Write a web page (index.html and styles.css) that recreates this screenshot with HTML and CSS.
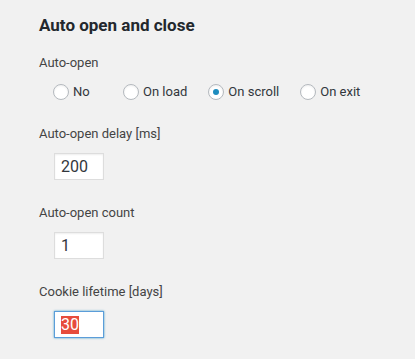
FILE: index.html
```html
<!DOCTYPE html>
<html>
<head>
<meta charset="utf-8">
<link rel="stylesheet" href="styles.css">
</head>
<body>
<div class="panel">
  <h3 class="title">Auto open and close</h3>
  <div class="field field-open">
    <div class="label">Auto-open</div>
    <div class="radios">
      <label class="opt opt-first"><span class="radio"></span><span>No</span></label>
      <label class="opt"><span class="radio"></span><span>On load</span></label>
      <label class="opt"><span class="radio checked"></span><span>On scroll</span></label>
      <label class="opt"><span class="radio"></span><span>On exit</span></label>
    </div>
  </div>
  <div class="field field-delay">
    <div class="label">Auto-open delay [ms]</div>
    <input class="num" type="text" value="200">
  </div>
  <div class="field field-count">
    <div class="label">Auto-open count</div>
    <input class="num" type="text" value="1">
  </div>
  <div class="field field-cookie">
    <div class="label">Cookie lifetime [days]</div>
    <div class="num focused"><span class="sel">30</span></div>
  </div>
</div>
</body>
</html>
```
FILE: styles.css
```css
html, body {
  margin: 0;
  padding: 0;
  background: #f1f1f1;
}
body {
  font-family: Roboto, "Noto Sans", sans-serif;
  color: #32373c;
  width: 415px;
  height: 359px;
  overflow: hidden;
}
.panel {
  padding: 14px 0 0 39px;
}
.title {
  margin: 0;
  font-size: 17px;
  font-weight: 700;
  color: #23282d;
  line-height: 22px;
}
.field {
  display: flex;
  flex-direction: column;
  align-items: flex-start;
}
.label {
  font-size: 13px;
  line-height: 18px;
  color: #444;
}
.radios {
  display: flex;
  gap: 21px;
  padding-left: 14px;
  margin-top: 11px;
}
.opt {
  display: inline-flex;
  align-items: center;
  gap: 4px;
  font-size: 13px;
  line-height: 18px;
  color: #32373c;
}
.opt-first {
  min-width: 49px;
}
.radio {
  width: 14px;
  height: 14px;
  border: 1px solid #b4b9be;
  border-radius: 50%;
  background: #fff;
  box-shadow: inset 0 1px 2px rgba(0,0,0,.07);
  display: inline-flex;
  align-items: center;
  justify-content: center;
  flex: none;
}
.radio.checked::before {
  content: "";
  width: 6px;
  height: 6px;
  border-radius: 50%;
  background: #1e8cbe;
}
.num {
  box-sizing: border-box;
  width: 50px;
  height: 27px;
  margin-left: 15px;
  margin-top: 10px;
  border: 1px solid #ddd;
  background: #fff;
  box-shadow: inset 0 1px 2px rgba(0,0,0,.07);
  font-family: Roboto, "Noto Sans", sans-serif;
  font-size: 16px;
  color: #32373c;
  padding: 0 6px;
  outline: none;
}
.field-open { margin-top: 18px; }
.field-delay { margin-top: 24px; }
.field-count { margin-top: 24px; }
.field-cookie { margin-top: 24px; }
.focused {
  border-color: #5b9dd9;
  box-shadow: 0 0 2px rgba(30,140,190,.8);
  display: flex;
  align-items: center;
}
.sel {
  background: #e74c3c;
  color: #fff;
  line-height: 18px;
}
```
